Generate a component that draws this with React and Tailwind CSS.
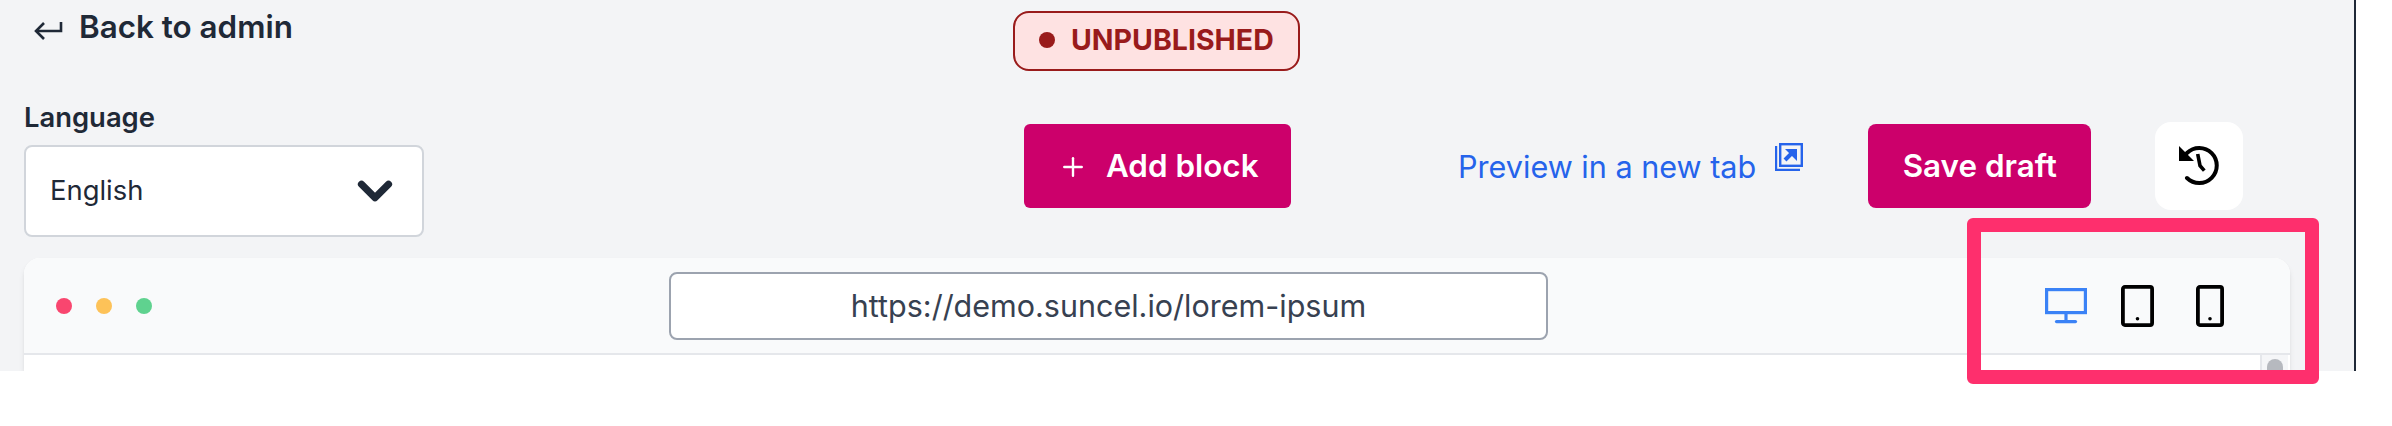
import React from 'react';
import { ChevronDown, Plus } from 'lucide-react';

const BackArrow = () => (
    <svg viewBox="0 0 30 20" className="mt-[6px] h-[20px] w-[30px]" fill="none" stroke="#1f2937" strokeWidth="2.6">
        <path d="M28 1v9H3" />
        <path d="M11 2l-8 8 8 8" />
    </svg>
);

const NewTabIcon = () => (
    <svg viewBox="0 0 28 28" className="h-[28px] w-[28px]" fill="none" stroke="#2563eb" strokeWidth="2.4">
        <path d="M1 3v24h24" />
        <rect x="5.2" y="1.2" width="21.6" height="21.6" />
        <path d="M10 17l7-7" strokeWidth="4" />
        <path d="M10 6h12v12z" fill="#2563eb" stroke="none" />
    </svg>
);

const HistoryIcon = () => (
    <svg viewBox="0 0 40 40" className="h-[40px] w-[40px]" fill="none" stroke="#000" strokeWidth="4">
        <path d="M8 7A17.5 17.5 0 1 1 8 32" strokeLinecap="round" />
        <path d="M0 0v15h15z" fill="#000" stroke="none" />
        <path d="M18.7 8L21 19.7l4.3 5" strokeWidth="3.6" />
    </svg>
);

const DesktopIcon = () => (
    <svg viewBox="0 0 42 36" className="h-[36px] w-[42px]" fill="none" stroke="#3b82f6" strokeWidth="3.2">
        <rect x="1.6" y="1.6" width="38.8" height="23" />
        <path d="M21 26v6" />
        <path d="M11.5 33.6h19" strokeLinecap="round" />
    </svg>
);

const DeviceIcon = ({ size }) => (
    <svg viewBox={size === 'tablet' ? '0 0 33 42' : '0 0 28 42'} className={size === 'tablet' ? 'h-[42px] w-[33px]' : 'h-[42px] w-[28px]'} fill="none" stroke="#000" strokeWidth="3.8">
        <rect x="1.9" y="1.9" width={size === 'tablet' ? 29.2 : 24.2} height="38.2" rx="2" />
        <circle cx={size === 'tablet' ? 16.5 : 14} cy="33.7" r="1.8" fill="#000" stroke="none" />
    </svg>
);

const App = () => {
    return (
        <div className="relative h-[426px] w-[2392px] overflow-hidden bg-white font-['Inter',sans-serif]">
            <div className="h-[371px] w-[2356px] overflow-hidden border-r-2 border-[#1f2937] bg-[#f3f4f6] pl-6 pr-[64px]">
                <div className="flex h-[258px] items-start">
                    <div className="w-[400px] shrink-0">
                        <a className="ml-[9px] flex h-[55px] items-center gap-[16px] text-[31.4px] font-semibold text-[#1f2937]">
                            <BackArrow />
                            <span>Back to admin</span>
                        </a>
                        <label className="mt-[46px] block text-[27.4px] leading-[32px] font-semibold text-[#1f2937]">Language</label>
                        <div className="mt-[12px] flex h-[92px] items-center justify-between rounded-lg border-2 border-[#d1d5db] bg-white pl-6 pr-[20px] text-[27.4px] text-[#1f2937]">
                            <span>English</span>
                            <ChevronDown className="h-[54px] w-[54px]" strokeWidth={3.2} />
                        </div>
                    </div>
                    <div className="ml-[589px] w-[287px] shrink-0">
                        <div className="mt-[11px] flex h-[60px] items-center gap-[16px] rounded-2xl border-2 border-[#991b1b] bg-[#fee2e2] pb-[2px] pl-6 text-[28.5px] font-bold text-[#991b1b]">
                            <span className="h-4 w-4 rounded-full bg-[#991b1b]"></span>
                            <span>UNPUBLISHED</span>
                        </div>
                        <button className="ml-[11px] mt-[53px] flex h-[84px] w-[267px] items-center gap-[18px] rounded-md bg-[#cc006b] pl-[34px] pt-[2px] text-[31.4px] font-semibold text-white">
                            <Plus className="h-[30px] w-[30px]" strokeWidth={1.9} />
                            <span>Add block</span>
                        </button>
                    </div>
                    <a className="ml-[158px] mt-[124px] flex h-[84px] items-center gap-[19px] pt-[2px] text-[30.6px] text-[#2563eb]">
                        <span>Preview in a new tab</span>
                        <span className="mb-[20px]"><NewTabIcon /></span>
                    </a>
                    <button className="ml-[65px] mt-[124px] h-[84px] w-[223px] rounded-lg bg-[#cc006b] pt-[1px] text-[31.4px] font-semibold text-white">Save draft</button>
                    <button className="ml-[64px] mt-[122px] flex h-[88px] w-[88px] items-center justify-center rounded-2xl bg-white">
                        <HistoryIcon />
                    </button>
                </div>
                <div className="h-[113px] rounded-t-2xl bg-white shadow-md">
                    <div className="flex h-[97px] items-center rounded-t-2xl border-b-2 border-[#e5e7eb] bg-[#f9fafb] pl-[32px]">
                        <div className="flex w-[613px] shrink-0 gap-[24px]">
                            <span className="h-4 w-4 rounded-full bg-[#f9466f]"></span>
                            <span className="h-4 w-4 rounded-full bg-[#fdc258]"></span>
                            <span className="h-4 w-4 rounded-full bg-[#5fd28f]"></span>
                        </div>
                        <div className="flex h-[68px] w-[879px] shrink-0 items-center justify-center rounded-lg border-2 border-[#9ca3af] bg-white text-[30.5px] text-[#374151]">
                            https://demo.suncel.io/lorem-ipsum
                        </div>
                        <div className="ml-[497px] flex items-center">
                            <DesktopIcon />
                            <span className="ml-[34px]"><DeviceIcon size="tablet" /></span>
                            <span className="ml-[42px]"><DeviceIcon size="phone" /></span>
                        </div>
                    </div>
                    <div className="flex h-[16px] justify-end pr-[2px]">
                        <div className="flex w-[28px] justify-center border-l-2 border-[#e5e7eb] bg-[#f5f6f8]">
                            <span className="mt-[4px] h-[20px] w-[16px] rounded-full bg-[#b6b9bf]"></span>
                        </div>
                    </div>
                </div>
            </div>
            {/* annotation rectangle drawn over the screenshot */}
            <div className="absolute left-[1967px] top-[218px] h-[166px] w-[352px] rounded-md border-[14px] border-[#fe2f6d]"></div>
        </div>
    );
};

export default App;
